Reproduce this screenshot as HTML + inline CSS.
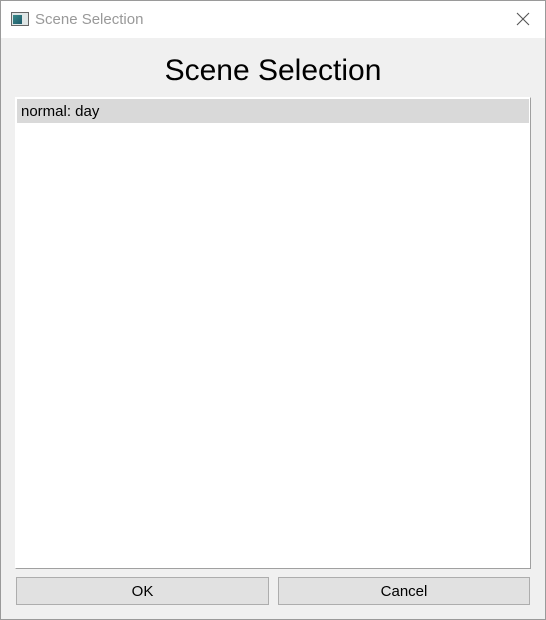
<!DOCTYPE html>
<html><head><style>
*{margin:0;padding:0;box-sizing:border-box}
body{width:546px;height:620px;overflow:hidden;background:#f0f0f0;font-family:"Liberation Sans","DejaVu Sans",sans-serif;position:relative}
.win{position:absolute;left:0;top:0;width:546px;height:620px;border:1px solid #9a9a9a}
.title{position:absolute;left:1px;top:1px;width:544px;height:37px;background:#fff}
.title span{position:absolute;left:34px;top:10px;font-size:15px;color:#999}
.ic{position:absolute;left:10px;top:11px;width:18px;height:14px;border:1px solid #666;background:#dfe6e6}
.ic i{position:absolute;left:1px;top:2px;width:9px;height:9px;background:linear-gradient(135deg,#3a8a8a,#1e5a6a)}
.x{position:absolute;left:515px;top:11px;width:14px;height:14px}
h1{position:absolute;left:0;width:546px;top:54px;text-align:center;font-weight:normal;font-size:30px;color:#000}
.list{position:absolute;left:15px;top:97px;width:516px;height:472px;background:#fff;border:1px solid #a0a0a0;border-top-color:#fff;border-left-color:#fff}
.sel{position:absolute;left:1px;top:1px;width:512px;height:24px;background:#d9d9d9;font-size:15px;padding:4px 0 0 4px;color:#000}
.btn{position:absolute;top:577px;height:28px;background:#e1e1e1;border:1px solid #adadad;font-size:15px;text-align:center;line-height:28px;color:#000}
</style></head><body>
<div class="win"></div>
<div class="title"><div class="ic"><i></i></div><span>Scene Selection</span>
<svg class="x" viewBox="0 0 14 14"><path d="M1 1L13 13M13 1L1 13" stroke="#555" stroke-width="1.1" fill="none"/></svg></div>
<h1>Scene Selection</h1>
<div class="list"><div class="sel">normal: day</div></div>
<div class="btn" style="left:16px;width:253px">OK</div>
<div class="btn" style="left:278px;width:252px">Cancel</div>
</body></html>
